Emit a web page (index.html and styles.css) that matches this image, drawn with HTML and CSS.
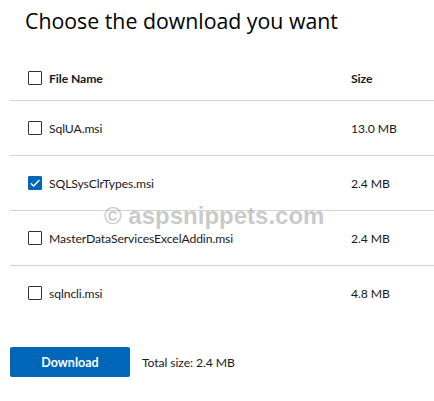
FILE: index.html
```html
<!DOCTYPE html>
<html lang="en">
<head>
    <meta charset="UTF-8">
    <meta name="viewport" content="width=device-width, initial-scale=1.0">
    <title>Choose the download you want</title>
    <link rel="stylesheet" href="styles.css">
</head>
<body>
    <div class="page">
        <h1 class="title">Choose the download you want</h1>

        <div class="files">
            <div class="row head">
                <label class="name"><span class="box"></span>File Name</label>
                <div class="size">Size</div>
            </div>
            <div class="row">
                <label class="name"><span class="box"></span>SqlUA.msi</label>
                <div class="size">13.0 MB</div>
            </div>
            <div class="row">
                <label class="name"><span class="box checked">
                    <svg viewBox="0 0 14 14" width="14" height="14"><path d="M2.8 7.2 L5.6 10 L11.4 4" fill="none" stroke="#fff" stroke-width="1.4"/></svg>
                </span>SQLSysClrTypes.msi</label>
                <div class="size">2.4 MB</div>
            </div>
            <div class="row">
                <label class="name"><span class="box"></span>MasterDataServicesExcelAddin.msi</label>
                <div class="size">2.4 MB</div>
            </div>
            <div class="row last">
                <label class="name"><span class="box"></span>sqlncli.msi</label>
                <div class="size">4.8 MB</div>
            </div>
        </div>

        <div class="actions">
            <button class="download">Download</button>
            <span class="total">Total size: 2.4 MB</span>
        </div>

        <div class="watermark">© aspsnippets.com</div>
    </div>
</body>
</html>
```

FILE: styles.css
```css
body {
    margin: 0;
    background: #fff;
    color: #1a1a1a;
    font-family: Lato, 'Open Sans', sans-serif;
}
.page {
    position: relative;
    padding-left: 10px;
    height: 401px;
}
.title {
    margin: 0;
    padding: 6px 0 0 15px;
    height: 50px;
    font-family: 'Open Sans', sans-serif;
    font-size: 21.3px;
    font-weight: 400;
    color: #000;
}
.files {
    font-size: 12.2px;
    letter-spacing: -0.1px;
}
.row {
    display: flex;
    align-items: center;
    height: 54px;
    border-bottom: 1px solid #d2d2d2;
}
.row.head {
    height: 44px;
    font-weight: 700;
}
.row.last {
    border-bottom: none;
}
.name {
    display: flex;
    align-items: center;
    width: 341px;
    padding-left: 18px;
    box-sizing: border-box;
}
.box {
    display: inline-block;
    width: 14px;
    height: 14px;
    box-sizing: border-box;
    border: 1px solid #333;
    border-radius: 1px;
    margin-right: 7px;
}
.box.checked {
    background: #0067b8;
    border-color: #0067b8;
    position: relative;
}
.box.checked svg {
    position: absolute;
    left: -1px;
    top: -1px;
}
.actions {
    display: flex;
    align-items: center;
    margin-top: 27px;
    font-size: 12.2px;
    letter-spacing: -0.1px;
}
.download {
    width: 120px;
    height: 30px;
    border: none;
    border-radius: 2px;
    background: #0067b8;
    color: #fff;
    font-family: inherit;
    font-size: 12.5px;
    font-weight: 700;
    margin-right: 12px;
}
.watermark {
    position: absolute;
    left: 104px;
    top: 202px;
    font-family: 'Liberation Sans', Arial, sans-serif;
    font-weight: 700;
    font-size: 24px;
    color: rgba(150, 150, 150, 0.5);
}
```
